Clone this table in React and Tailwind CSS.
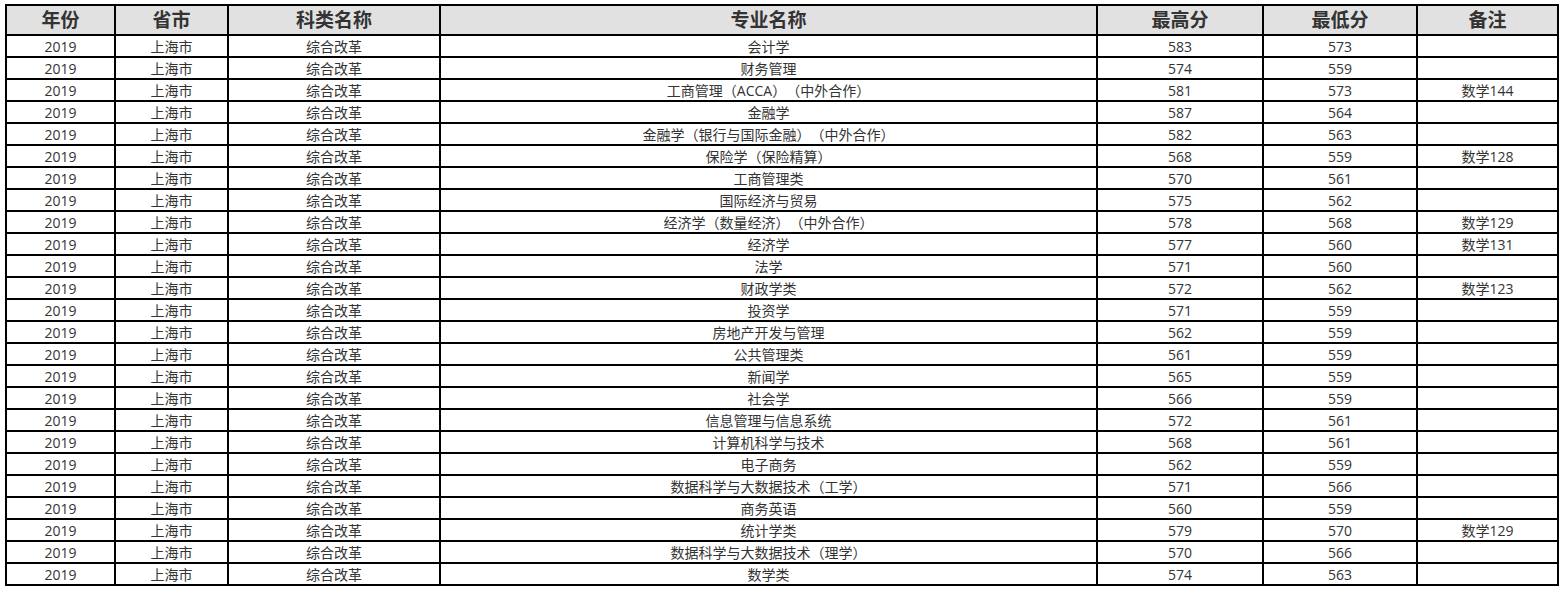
/* ============================================================
   DATA
============================================================ */
const ROWS = [
  ["会计学", 583, 573, ""],
  ["财务管理", 574, 559, ""],
  ["工商管理（ACCA）（中外合作）", 581, 573, "数学144"],
  ["金融学", 587, 564, ""],
  ["金融学（银行与国际金融）（中外合作）", 582, 563, ""],
  ["保险学（保险精算）", 568, 559, "数学128"],
  ["工商管理类", 570, 561, ""],
  ["国际经济与贸易", 575, 562, ""],
  ["经济学（数量经济）（中外合作）", 578, 568, "数学129"],
  ["经济学", 577, 560, "数学131"],
  ["法学", 571, 560, ""],
  ["财政学类", 572, 562, "数学123"],
  ["投资学", 571, 559, ""],
  ["房地产开发与管理", 562, 559, ""],
  ["公共管理类", 561, 559, ""],
  ["新闻学", 565, 559, ""],
  ["社会学", 566, 559, ""],
  ["信息管理与信息系统", 572, 561, ""],
  ["计算机科学与技术", 568, 561, ""],
  ["电子商务", 562, 559, ""],
  ["数据科学与大数据技术（工学）", 571, 566, ""],
  ["商务英语", 560, 559, ""],
  ["统计学类", 579, 570, "数学129"],
  ["数据科学与大数据技术（理学）", 570, 566, ""],
  ["数学类", 574, 563, ""],
];

const HEADERS = ["年份", "省市", "科类名称", "专业名称", "最高分", "最低分", "备注"];

const th =
  "border-2 border-black bg-[#e1e1e1] h-[30px] p-0 text-[19px] font-bold text-[#333] text-center leading-none";
const td =
  "border-2 border-black h-[22px] p-0 pt-px text-[14px] text-[#333] text-center leading-none [text-spacing-trim:space-all]";

/* ============================================================
   PAGE
============================================================ */
export default function App() {
  return (
    <div
      className="bg-white min-h-[591px] pt-[4px] pl-[5px]"
      style={{ fontFamily: '"Open Sans", "Noto Sans CJK SC", sans-serif' }}
    >
      <table className="table-fixed border-collapse w-[1552px]">
        <colgroup>
          <col className="w-[109px]" />
          <col className="w-[113px]" />
          <col className="w-[212px]" />
          <col className="w-[657px]" />
          <col className="w-[166px]" />
          <col className="w-[154px]" />
          <col className="w-[141px]" />
        </colgroup>
        <thead>
          <tr>
            {HEADERS.map((h) => (
              <th key={h} className={th}>
                {h}
              </th>
            ))}
          </tr>
        </thead>
        <tbody>
          {ROWS.map(([name, hi, lo, note], i) => (
            <tr key={i}>
              <td className={td}>2019</td>
              <td className={td}>上海市</td>
              <td className={td}>综合改革</td>
              <td className={td}>{name}</td>
              <td className={td}>{hi}</td>
              <td className={td}>{lo}</td>
              <td className={td}>{note}</td>
            </tr>
          ))}
        </tbody>
      </table>
    </div>
  );
}
